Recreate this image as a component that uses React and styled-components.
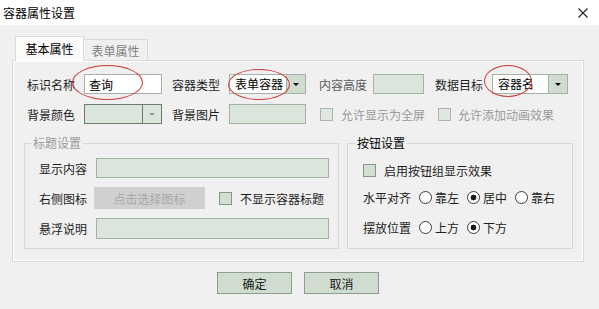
import styled, { createGlobalStyle } from 'styled-components';

const GlobalStyle = createGlobalStyle`
  html, body {
    margin: 0;
    padding: 0;
    background: #f0f0f0;
    font-family: "Noto Sans CJK SC", "Microsoft YaHei", sans-serif;
    font-size: 12px;
  }
`;

export default function App() {
  return (
    <>
      <GlobalStyle />
      <Window>
        <TitleBar>
          <span>容器属性设置</span>
          <svg width='10' height='10' viewBox='0 0 10 10'>
            <path d='M0.5 0.5 L9.5 9.5 M9.5 0.5 L0.5 9.5' stroke='#222' strokeWidth='1.1' />
          </svg>
        </TitleBar>

        <Body>
          <Tabs>
            <Tab $active>基本属性</Tab>
            <Tab>表单属性</Tab>
          </Tabs>

          <Panel>
            <Row $pad={14}>
              <Label>标识名称</Label>
              <Input $w={78} value='查询' readOnly />
              <Label $ml={10}>容器类型</Label>
              <Select $w={77}>
                <span>表单容器</span>
                <Arrow />
              </Select>
              <Label $ml={13} $gap={6} $muted>内容高度</Label>
              <Input $w={51} $disabled readOnly value='' />
              <Label $ml={11}>数据目标</Label>
              <Select $w={76}>
                <span>容器名</span>
                <Arrow />
              </Select>
            </Row>

            <Row $pad={14} $mt={10}>
              <Label>背景颜色</Label>
              <Select $w={78} $disabled>
                <span />
                <Arrow $disabled />
              </Select>
              <Label $ml={10}>背景图片</Label>
              <Input $w={77} $disabled readOnly value='' />
              <Check $ml={14} $disabled />
              <CheckText $disabled>允许显示为全屏</CheckText>
              <Check $ml={13} $disabled />
              <CheckText $disabled $gap={7}>允许添加动画效果</CheckText>
            </Row>

            <Groups>
              <Group $w={315}>
                <Legend $disabled>标题设置</Legend>
                <GroupRow $mt={5}>
                  <Label>显示内容</Label>
                  <Input $w={233} $disabled readOnly value='' />
                </GroupRow>
                <GroupRow $mt={8}>
                  <Label $gap={7}>右侧图标</Label>
                  <PickButton>点击选择图标</PickButton>
                  <Check $ml={14} />
                  <CheckText>不显示容器标题</CheckText>
                </GroupRow>
                <GroupRow $mt={8}>
                  <Label>悬浮说明</Label>
                  <Input $w={233} $h={21} $disabled readOnly value='' />
                </GroupRow>
              </Group>

              <Group $w={226} $pl={15}>
                <Legend>按钮设置</Legend>
                <GroupRow $mt={7}>
                  <Check />
                  <CheckText>启用按钮组显示效果</CheckText>
                </GroupRow>
                <GroupRow $mt={5}>
                  <Label $gap={8}>水平对齐</Label>
                  <Radio>靠左</Radio>
                  <Radio $checked>居中</Radio>
                  <Radio>靠右</Radio>
                </GroupRow>
                <GroupRow $mt={8}>
                  <Label $gap={8}>摆放位置</Label>
                  <Radio>上方</Radio>
                  <Radio $checked>下方</Radio>
                </GroupRow>
              </Group>
            </Groups>
          </Panel>

          <Footer>
            <Button>确定</Button>
            <Button>取消</Button>
          </Footer>
        </Body>

        <Mark $x={72} $y={65} $w={71} $h={35} />
        <Mark $x={228} $y={69} $w={62} $h={31} />
        <Mark $x={484} $y={65} $w={48} $h={32} />
      </Window>
    </>
  );
}

const Window = styled.div`
  position: relative;
  width: 599px;
  height: 309px;
  overflow: hidden;
  background: #f0f0f0;
  color: #1e1e1e;
`;

const TitleBar = styled.div`
  height: 25px;
  background: #fff;
  display: flex;
  align-items: center;
  justify-content: space-between;
  padding: 0 11px 0 3px;
  box-sizing: border-box;
  font-size: 12px;
  color: #000;
  svg {
    display: block;
  }
`;

const Body = styled.div`
  padding: 11px 0 0 12px;
`;

const Tabs = styled.div`
  display: flex;
  align-items: flex-end;
  height: 25px;
  padding-left: 3px;
  margin-bottom: -1px;
  position: relative;
  z-index: 1;
`;

const Tab = styled.div`
  box-sizing: border-box;
  display: flex;
  align-items: center;
  justify-content: center;
  width: ${(p) => (p.$active ? 69 : 64)}px;
  height: ${(p) => (p.$active ? 25 : 22)}px;
  border: 1px solid #d9d9d9;
  border-bottom: ${(p) => (p.$active ? 'none' : '1px solid #d9d9d9')};
  border-left: ${(p) => (p.$active ? '1px solid #d9d9d9' : 'none')};
  background: ${(p) => (p.$active ? '#fbfbfb' : '#f0f0f0')};
  color: ${(p) => (p.$active ? '#000' : '#808080')};
  padding-bottom: ${(p) => (p.$active ? 2 : 0)}px;
`;

const Panel = styled.div`
  box-sizing: border-box;
  width: 572px;
  height: 202px;
  border: 1px solid #d9d9d9;
  box-shadow: inset 0 0 0 1px #fff;
  padding-top: 13px;
`;

const Row = styled.div`
  display: flex;
  align-items: center;
  height: 20px;
  padding-left: ${(p) => p.$pad || 0}px;
  margin-top: ${(p) => p.$mt || 0}px;
`;

const Label = styled.span`
  flex: none;
  width: 48px;
  white-space: nowrap;
  margin-left: ${(p) => p.$ml || 0}px;
  margin-right: ${(p) => (p.$gap ?? 9)}px;
  color: ${(p) => (p.$muted ? '#5a5a5a' : '#1e1e1e')};
`;

const Input = styled.input`
  box-sizing: border-box;
  flex: none;
  width: ${(p) => p.$w}px;
  height: ${(p) => p.$h || 20}px;
  margin: 0;
  padding: 0 4px;
  border: 1px solid #a3b3a3;
  background: ${(p) => (p.$disabled ? '#dce5dc' : '#fff')};
  font: inherit;
  color: #000;
  outline: none;
`;

const Select = styled.div`
  box-sizing: border-box;
  flex: none;
  display: flex;
  width: ${(p) => p.$w}px;
  height: 20px;
  border: 1px solid ${(p) => (p.$disabled ? '#6f7a6f' : '#a3b3a3')};
  background: ${(p) => (p.$disabled ? '#dce5dc' : '#fff')};
  span {
    flex: 1;
    padding-left: 5px;
    line-height: 18px;
    color: #000;
  }
`;

const Arrow = styled.div`
  width: 18px;
  border-left: 1px solid ${(p) => (p.$disabled ? '#6f7a6f' : '#a3b3a3')};
  background: ${(p) => (p.$disabled ? '#dce5dc' : '#cfdccf')};
  display: flex;
  align-items: center;
  justify-content: center;
  &::after {
    content: '';
    border-left: 3px solid transparent;
    border-right: 3px solid transparent;
    border-top: 3px solid ${(p) => (p.$disabled ? '#9a9a9a' : '#000')};
  }
`;

const Check = styled.span`
  flex: none;
  box-sizing: border-box;
  width: 13px;
  height: 13px;
  margin-left: ${(p) => p.$ml || 0}px;
  border: 1px solid ${(p) => (p.$disabled ? '#aab4aa' : '#879787')};
  background: ${(p) => (p.$disabled ? '#e0e7e0' : '#d3dfd3')};
`;

const CheckText = styled.span`
  white-space: nowrap;
  margin-left: ${(p) => p.$gap || 8}px;
  color: ${(p) => (p.$disabled ? '#9a9a9a' : '#1e1e1e')};
`;

const Groups = styled.div`
  display: flex;
  gap: 8px;
  padding-left: 11px;
  margin-top: 10px;
`;

const Group = styled.fieldset`
  box-sizing: border-box;
  width: ${(p) => p.$w}px;
  height: 115px;
  margin: 0;
  padding: 0 0 0 ${(p) => p.$pl || 14}px;
  border: 1px solid #d7d7d7;
  min-width: 0;
`;

const Legend = styled.legend`
  margin-left: -8px;
  padding: 0 2px;
  line-height: 18px;
  color: ${(p) => (p.$disabled ? '#9a9a9a' : '#000')};
`;

const GroupRow = styled.div`
  display: flex;
  align-items: center;
  height: 22px;
  margin-top: ${(p) => p.$mt || 0}px;
`;

const PickButton = styled.div`
  flex: none;
  width: 111px;
  height: 22px;
  background: #d0d0d0;
  color: #a8a8a8;
  display: flex;
  align-items: center;
  justify-content: center;
`;

const RadioWrap = styled.span`
  display: flex;
  align-items: center;
  margin-right: 8px;
  white-space: nowrap;
  &::before {
    content: '';
    box-sizing: border-box;
    width: 13px;
    height: 13px;
    border-radius: 50%;
    border: 1px solid #3a3a3a;
    margin-right: 3px;
    background: ${(p) =>
      p.$checked ? 'radial-gradient(circle, #1a1a1a 0 2.6px, #fff 3.2px)' : '#fff'};
  }
`;

function Radio({ children, $checked }) {
  return <RadioWrap $checked={$checked}>{children}</RadioWrap>;
}

const Footer = styled.div`
  display: flex;
  justify-content: center;
  gap: 12px;
  width: 572px;
  margin-top: 10px;
`;

const Button = styled.div`
  box-sizing: border-box;
  width: 75px;
  height: 22px;
  border: 1px solid #8c9e8c;
  background: #cfdccf;
  color: #142014;
  display: flex;
  align-items: center;
  justify-content: center;
`;

const Mark = styled.div`
  position: absolute;
  left: ${(p) => p.$x}px;
  top: ${(p) => p.$y}px;
  width: ${(p) => p.$w}px;
  height: ${(p) => p.$h}px;
  border: 1px solid #cf3a3a;
  border-radius: 50%;
  box-sizing: border-box;
  pointer-events: none;
`;
